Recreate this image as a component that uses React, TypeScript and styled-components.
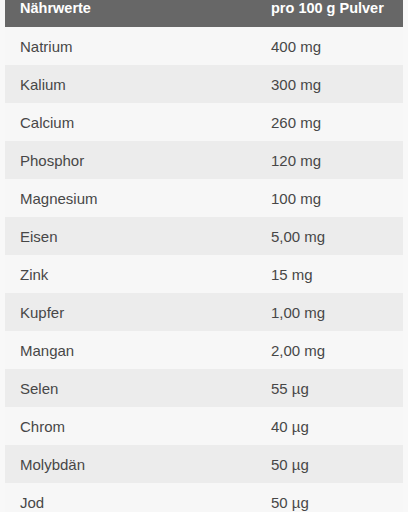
import styled, { createGlobalStyle } from 'styled-components';

const GlobalStyle = createGlobalStyle`
  html, body {
    margin: 0;
    padding: 0;
    background: #f8f8f8;
    overflow: hidden;
  }
`;

const Page = styled.div`
  padding: 0 5px;
  margin-top: -11px;
`;

const Table = styled.table`
  width: 100%;
  border-collapse: collapse;
  font-family: "Liberation Sans", Arial, sans-serif;
  font-size: 15px;
`;

const HeadCell = styled.th<{ wide?: boolean }>`
  background: #676767;
  color: #ffffff;
  font-size: 14.5px;
  font-weight: bold;
  text-align: left;
  height: 38px;
  padding: 0 15px;
  width: ${({ wide }) => (wide ? '251px' : 'auto')};
  box-sizing: border-box;
`;

const Row = styled.tr<{ shaded?: boolean }>`
  background: ${({ shaded }) => (shaded ? '#ececec' : '#f7f7f7')};
`;

const Cell = styled.td`
  color: #474747;
  height: 38px;
  padding: 0 15px;
`;

const rows: [string, string][] = [
  ['Natrium', '400 mg'],
  ['Kalium', '300 mg'],
  ['Calcium', '260 mg'],
  ['Phosphor', '120 mg'],
  ['Magnesium', '100 mg'],
  ['Eisen', '5,00 mg'],
  ['Zink', '15 mg'],
  ['Kupfer', '1,00 mg'],
  ['Mangan', '2,00 mg'],
  ['Selen', '55 µg'],
  ['Chrom', '40 µg'],
  ['Molybdän', '50 µg'],
  ['Jod', '50 µg'],
];

export default function App() {
  return (
    <>
      <GlobalStyle />
      <Page>
        <Table>
          <thead>
            <tr>
              <HeadCell wide>Nährwerte</HeadCell>
              <HeadCell>pro 100 g Pulver</HeadCell>
            </tr>
          </thead>
          <tbody>
            {rows.map(([name, value], i) => (
              <Row key={name} shaded={i % 2 === 1}>
                <Cell>{name}</Cell>
                <Cell>{value}</Cell>
              </Row>
            ))}
          </tbody>
        </Table>
      </Page>
    </>
  );
}
